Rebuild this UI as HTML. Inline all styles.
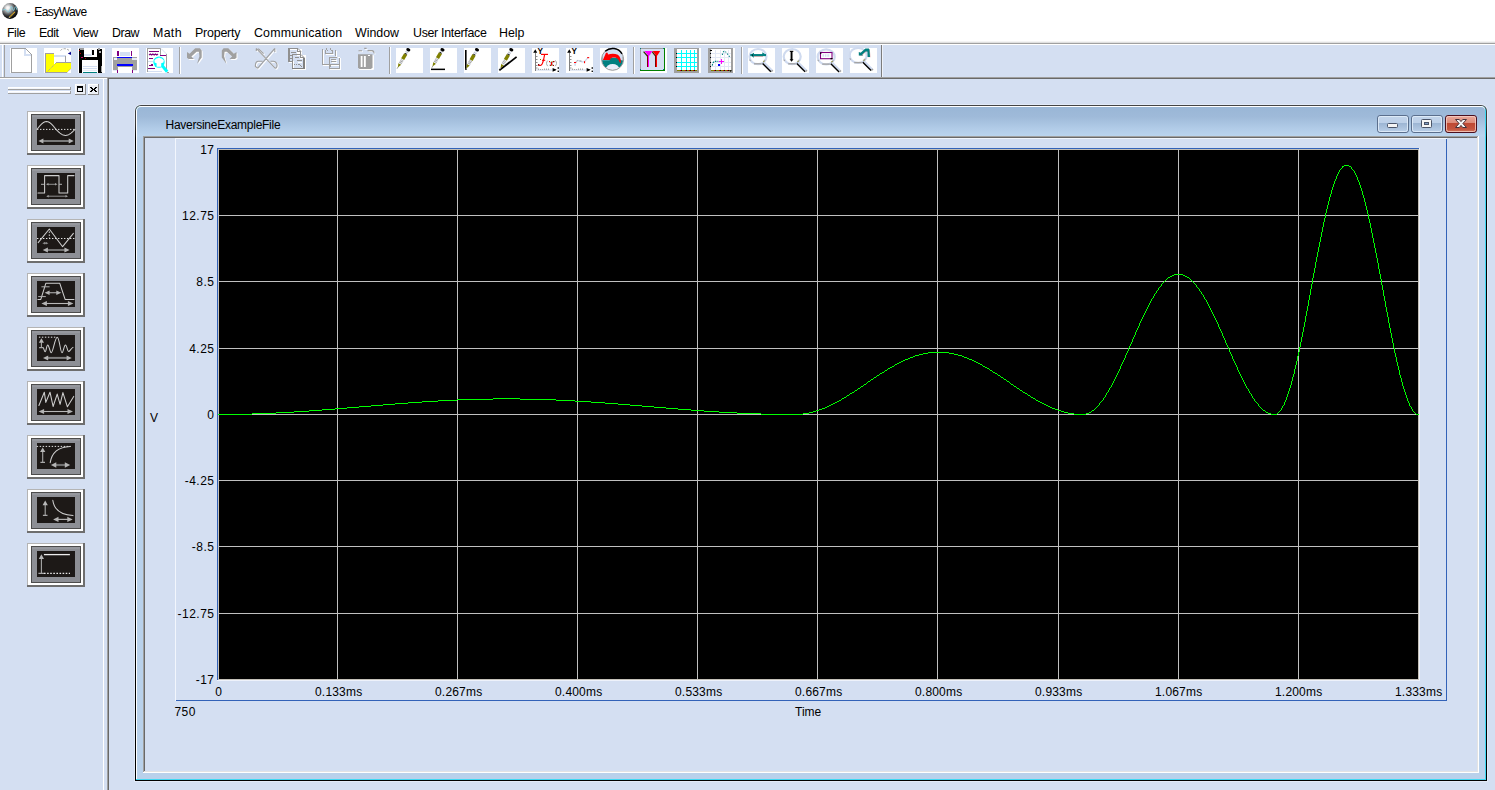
<!DOCTYPE html>
<html><head><meta charset="utf-8"><title>- EasyWave</title>
<style>
*{box-sizing:border-box;margin:0;padding:0}
html,body{width:1495px;height:790px;overflow:hidden}
body{background:#d4dff2;font-family:"Liberation Sans",sans-serif;font-size:12px;color:#000;position:relative}
.abs{position:absolute}
.t{position:absolute;white-space:nowrap;line-height:14px;height:14px}
#titlebar{left:0;top:0;width:1495px;height:22px;background:#fff}
#menubar{left:0;top:22px;width:1495px;height:19px;background:#fff}
.mi{position:absolute;top:26px;line-height:14px;white-space:nowrap;font-size:12.4px}
.btn9{position:absolute;left:27px;width:58px;height:43px}
.yl{position:absolute;right:1280.5px;letter-spacing:0.5px;text-align:right;line-height:14px;white-space:nowrap;font-size:12px}
.xl{position:absolute;top:685px;width:80px;letter-spacing:0.2px;padding-left:1.4px;text-align:center;line-height:14px;white-space:nowrap;font-size:12px}
</style></head><body>
<!-- title bar -->
<div id="titlebar" class="abs"></div>
<svg class="abs" style="left:0;top:0" width="22" height="22" viewBox="0 0 22 22">
<defs><radialGradient id="sph" cx="0.38" cy="0.32" r="0.75" fx="0.36" fy="0.3"><stop offset="0" stop-color="#ffffff"/><stop offset="0.14" stop-color="#ececec"/><stop offset="0.36" stop-color="#9a9c9e"/><stop offset="0.62" stop-color="#3a3c3e"/><stop offset="0.88" stop-color="#080808"/></radialGradient></defs>
<circle cx="10" cy="11" r="7.9" fill="url(#sph)"/>
<path d="M2.4 10.3C3.6 9.6 4.8 9.2 5.8 9.6C6.8 10.2 7.2 12.2 8.4 12.2C9.6 12.2 10.6 6.4 11.6 6.4C12.4 6.4 12.6 10.6 13.4 10.6C14.2 10.6 14.8 6.7 15.6 6.7C16.2 6.7 16.6 9 17 10.2" stroke="#7fd2e2" stroke-width="0.9" fill="none" stroke-opacity="0.9"/>
<path d="M9.6 17.2L15 11.8" stroke="#f0b822" stroke-width="1.3" stroke-dasharray="0.9 0.35" fill="none"/>
<path d="M9 17.8L9.8 17" stroke="#e8e8e8" stroke-width="1" fill="none"/>
</svg>
<div class="t" id="apptitle" style="left:26.5px;top:5px;font-size:12px;letter-spacing:-0.58px;word-spacing:1.6px">- EasyWave</div>
<!-- menu bar -->
<div id="menubar" class="abs"></div>
<div class="mi" style="left:7px;letter-spacing:-0.45px">File</div>
<div class="mi" style="left:39px;letter-spacing:-0.45px">Edit</div>
<div class="mi" style="left:73px;letter-spacing:-0.5px">View</div>
<div class="mi" style="left:112px;letter-spacing:-0.45px">Draw</div>
<div class="mi" style="left:153px;letter-spacing:0.33px">Math</div>
<div class="mi" style="left:195px;letter-spacing:-0.19px">Property</div>
<div class="mi" style="left:254px;letter-spacing:0.17px">Communication</div>
<div class="mi" style="left:355px">Window</div>
<div class="mi" style="left:413px;letter-spacing:-0.31px">User Interface</div>
<div class="mi" style="left:499px">Help</div>
<div class="abs" style="left:0;top:41px;width:1495px;height:1px;background:#f4f4f4"></div>
<div class="abs" style="left:0;top:42px;width:1495px;height:1px;background:#e0e0e0"></div>
<div class="abs" style="left:0;top:43px;width:1495px;height:1px;background:#a0a0a0"></div>
<div class="abs" style="left:0;top:44px;width:1495px;height:1px;background:#fff"></div>
<!-- toolbar -->
<svg class="abs" style="left:0;top:45px" width="900" height="33" viewBox="0 45 900 33">
<rect x="2" y="45" width="1" height="32" fill="#fff"/><rect x="4" y="45" width="1" height="32" fill="#a0a0a0"/>
<rect x="881" y="45" width="1" height="32" fill="#7c7c7c"/><rect x="882" y="45" width="1" height="32" fill="#eef2fa"/>
<rect x="10" y="48" width="27" height="25" fill="#fff"/>
<rect x="44" y="48" width="27" height="25" fill="#fff"/>
<rect x="78" y="48" width="27" height="25" fill="#fff"/>
<rect x="112" y="48" width="27" height="25" fill="#fff"/>
<rect x="146" y="48" width="27" height="25" fill="#fff"/>
<rect x="396" y="48" width="27" height="25" fill="#fff"/>
<rect x="430" y="48" width="27" height="25" fill="#fff"/>
<rect x="464" y="48" width="27" height="25" fill="#fff"/>
<rect x="498" y="48" width="27" height="25" fill="#fff"/>
<rect x="532" y="48" width="27" height="25" fill="#fff"/>
<rect x="566" y="48" width="27" height="25" fill="#fff"/>
<rect x="600" y="48" width="27" height="25" fill="#fff"/>
<rect x="748" y="48" width="27" height="25" fill="#fff"/>
<rect x="782" y="48" width="27" height="25" fill="#fff"/>
<rect x="816" y="48" width="27" height="25" fill="#fff"/>
<rect x="850" y="48" width="27" height="25" fill="#fff"/>
<g transform="translate(10,48)" shape-rendering="crispEdges"><path d="M1.5 0.5H15.5L21.5 6.5V24.5H1.5z" fill="#fff" stroke="#a0a0a0"/><path d="M14 1h1.5v5h5.5v1.5H14z" fill="#d4dff2"/></g>
<path d="M25.5 48.5L31.5 54.5" stroke="#a0a0a0" stroke-width="1" fill="none"/>
<g transform="translate(44,48)" shape-rendering="crispEdges"><rect x="1" y="5" width="9" height="20" fill="#a0a0a0"/><rect x="2" y="6" width="8" height="18" fill="#ffff00"/><rect x="10" y="7" width="12" height="2" fill="#d4dff2"/><rect x="21" y="8" width="1" height="7" fill="#a0a0a0"/><path d="M12.2 14.5H27V20.3L23 24.5H2z" fill="#ffff00"/><rect x="12" y="14" width="15" height="1" fill="#a0a0a0"/><rect x="1" y="24" width="22" height="1" fill="#a0a0a0"/></g>
<g transform="translate(44,48)" ><path d="M2.5 24.5L12.5 14.5" stroke="#a0a0a0" stroke-width="1" stroke-dasharray="1 1" fill="none"/><path d="M23 24.5L27 20.5" stroke="#a0a0a0" stroke-width="1" stroke-dasharray="1 1" fill="none"/><path d="M16.5 2.5C18.5 0 23.5 -0.2 26.3 3.8" stroke="#a0a0a0" stroke-width="1" stroke-dasharray="2.2 1.4" fill="none"/><path d="M23.8 5.4L27 3.8V7z" fill="#00008b"/></g>
<g transform="translate(78,48)" shape-rendering="crispEdges"><rect x="1" y="1" width="23" height="24" fill="#000"/><rect x="6" y="0" width="13" height="9" fill="#fff"/><rect x="6" y="6" width="8" height="2" fill="#d4dff2"/><rect x="14" y="2" width="2" height="5" fill="#000"/><rect x="13" y="1" width="1" height="7" fill="#eaeff9"/><rect x="1" y="0" width="1" height="1" fill="#a0a0a0"/><rect x="2" y="0" width="4" height="2" fill="#a0a0a0"/><rect x="20" y="0" width="2" height="2" fill="#a0a0a0"/><rect x="21" y="3" width="2" height="2" fill="#b0b0b0"/><rect x="4" y="12" width="16" height="13" fill="#fff"/><rect x="5" y="18" width="14" height="1" fill="#d4dff2"/><rect x="5" y="20" width="14" height="1" fill="#d4dff2"/><rect x="5" y="22" width="14" height="1" fill="#e6ebf7"/><rect x="5" y="24" width="14" height="1" fill="#008080"/><rect x="1" y="2" width="1" height="1" fill="#c00000"/><rect x="2" y="5" width="1" height="1" fill="#c00000"/><rect x="3" y="9" width="2" height="1" fill="#c00060"/><rect x="7" y="10" width="1" height="1" fill="#a00000"/><rect x="23" y="18" width="1" height="6" fill="#a0a0a0"/></g>
<g transform="translate(112,48)" shape-rendering="crispEdges"><rect x="5" y="3" width="2" height="5" fill="#800080"/><rect x="19" y="3" width="1" height="5" fill="#800080"/><rect x="8" y="4" width="10" height="4" fill="#d4dff2"/><rect x="1" y="9" width="24" height="13" fill="#a0a0a0"/><rect x="2" y="10" width="3" height="2" fill="#eef2fa"/><rect x="20" y="10" width="5" height="2" fill="#e6ebf7"/><rect x="5" y="9" width="15" height="1" fill="#0000ff"/><rect x="5" y="16" width="16" height="2" fill="#0000ff"/><rect x="6" y="19" width="14" height="6" fill="#fff"/><rect x="5" y="22" width="1" height="3" fill="#800080"/><rect x="20" y="22" width="1" height="3" fill="#800080"/><rect x="1" y="22" width="4" height="1" fill="#e6ebf7"/><rect x="21" y="22" width="4" height="1" fill="#e6ebf7"/></g>
<g transform="translate(146,48)" shape-rendering="crispEdges"><rect x="1" y="0" width="14" height="1" fill="#a0a0a0"/><rect x="1" y="0" width="1" height="24" fill="#a0a0a0"/><rect x="20" y="6" width="1" height="18" fill="#a0a0a0"/><rect x="14" y="0" width="1" height="7" fill="#a0a0a0"/><rect x="14" y="7" width="6" height="1" fill="#800080"/><rect x="3" y="3" width="10" height="1" fill="#800080"/><rect x="3" y="10" width="4" height="1" fill="#800080"/><rect x="3" y="17" width="4" height="1" fill="#800080"/><rect x="5" y="16" width="2" height="1" fill="#800080"/><rect x="2" y="20" width="7" height="1" fill="#800080"/><rect x="2" y="13" width="5" height="1" fill="#d4dff2"/><rect x="2" y="23" width="14" height="1" fill="#d4dff2"/></g>
<g transform="translate(146,48)" ><path d="M15 0.5L20.5 6" stroke="#d4dff2" stroke-width="1" fill="none"/><path d="M3 7l1.3-1 1.3 1 1.3-1 1.3 1 1.3-1 1.3 1 1.2-1" stroke="#800080" stroke-width="1.1" fill="none"/><path d="M16.2 17.6L21.2 23.8" stroke="#00ffff" stroke-width="3" fill="none"/><circle cx="13" cy="14.1" r="5.7" fill="#00ffff"/><path d="M8.4 12.2L10.4 10.4L12.4 10L13 9.2L13.8 10L15.8 10.4L17.8 12.2L17.4 14.6L15.2 15.2V18.8H10.6V15.2L8.6 14.6z" fill="#fff"/><rect x="21" y="24" width="2" height="1" fill="#a0a0a0"/></g>
<rect x="179" y="47" width="1" height="27" fill="#a0a0a0"/><rect x="180" y="47" width="1" height="27" fill="#fff"/>
<path d="M187 52V57.8L188.6 59H194L191.4 56.6L196.6 51.7H198.9L199.4 56.2L197.1 63.7L201.7 57.6V50.5L199.9 48.2H195.2L189.6 53.8z" fill="#fff" transform="translate(1,1)"/><path d="M187 52V57.8L188.6 59H194L191.4 56.6L196.6 51.7H198.9L199.4 56.2L197.1 63.7L201.7 57.6V50.5L199.9 48.2H195.2L189.6 53.8z" fill="#a0a0a0"/>
<g transform="translate(423.5,0) scale(-1,1)"><path d="M187 52V57.8L188.6 59H194L191.4 56.6L196.6 51.7H198.9L199.4 56.2L197.1 63.7L201.7 57.6V50.5L199.9 48.2H195.2L189.6 53.8z" fill="#fff" transform="translate(-1,1)"/><path d="M187 52V57.8L188.6 59H194L191.4 56.6L196.6 51.7H198.9L199.4 56.2L197.1 63.7L201.7 57.6V50.5L199.9 48.2H195.2L189.6 53.8z" fill="#a0a0a0"/></g>
<path d="M256.3 48.4L274.6 67.6M258.3 48.6L263.6 53.6M256.3 48.4V51M274.8 48.4L257.8 68.2M274.8 48.4V52M270.5 61.3H273.5C276 61.6 277.3 63.6 277 66C276.6 68 275.3 68.7 274.6 67.6M262.5 61.3H258C255.6 61.6 255.2 63.4 255.4 66.5L257.8 68.2" stroke="#fff" stroke-width="1.1" fill="none" transform="translate(1,1)"/><path d="M256.3 48.4L274.6 67.6M258.3 48.6L263.6 53.6M256.3 48.4V51M274.8 48.4L257.8 68.2M274.8 48.4V52M270.5 61.3H273.5C276 61.6 277.3 63.6 277 66C276.6 68 275.3 68.7 274.6 67.6M262.5 61.3H258C255.6 61.6 255.2 63.4 255.4 66.5L257.8 68.2" stroke="#a0a0a0" stroke-width="1.1" fill="none"/>
<g shape-rendering="crispEdges"><rect x="289" y="49" width="13" height="14" fill="#fff"/><rect x="293" y="55" width="13" height="15" fill="#fff"/><rect x="288" y="48" width="2" height="14" fill="#909090"/><rect x="288" y="48" width="10" height="1" fill="#909090"/><rect x="288" y="61" width="5" height="1" fill="#909090"/><rect x="300" y="52" width="1" height="3" fill="#909090"/><rect x="297" y="48" width="1" height="4" fill="#909090"/><rect x="297" y="51" width="4" height="1" fill="#909090"/><rect x="290" y="50" width="7" height="11" fill="#d4dff2"/><rect x="291" y="52" width="5" height="1" fill="#909090"/><rect x="290" y="55" width="2" height="1" fill="#909090"/><rect x="290" y="58" width="2" height="1" fill="#909090"/><rect x="292" y="54" width="1" height="15" fill="#909090"/><rect x="292" y="54" width="9" height="1" fill="#909090"/><rect x="303" y="58" width="2" height="11" fill="#808080"/><rect x="292" y="68" width="13" height="1" fill="#808080"/><rect x="300" y="54" width="1" height="4" fill="#909090"/><rect x="300" y="57" width="4" height="1" fill="#909090"/><rect x="294" y="56" width="6" height="12" fill="#d4dff2"/><rect x="300" y="59" width="3" height="9" fill="#d4dff2"/><rect x="295" y="57" width="4" height="1" fill="#909090"/><rect x="297" y="60" width="5" height="1" fill="#909090"/><rect x="298" y="62" width="4" height="1" fill="#fff"/><rect x="294" y="64" width="1" height="1" fill="#909090"/><rect x="296" y="64" width="1" height="1" fill="#909090"/><rect x="298" y="64" width="1" height="1" fill="#909090"/></g><path d="M298 48.5L301 51.5M301 54.5L304.5 58M299 64L302 67" stroke="#909090" stroke-width="1" fill="none"/>
<g shape-rendering="crispEdges"><rect x="323" y="50" width="1" height="16" fill="#fff"/><rect x="323" y="65" width="7" height="1" fill="#fff"/><rect x="336" y="51" width="1" height="6" fill="#fff"/><rect x="322" y="49" width="1" height="16" fill="#a0a0a0"/><rect x="322" y="64" width="7" height="1" fill="#a0a0a0"/><rect x="335" y="50" width="1" height="6" fill="#a0a0a0"/><rect x="326" y="54" width="8" height="1" fill="#fff"/><rect x="325" y="53" width="8" height="1" fill="#a0a0a0"/><rect x="325" y="50" width="1" height="3" fill="#a0a0a0"/><rect x="332" y="50" width="1" height="3" fill="#a0a0a0"/><rect x="326" y="48" width="1" height="2" fill="#a0a0a0"/><rect x="330" y="48" width="1" height="2" fill="#a0a0a0"/><rect x="327" y="50" width="1" height="1" fill="#a0a0a0"/><rect x="331" y="50" width="1" height="1" fill="#a0a0a0"/><rect x="330" y="58" width="11" height="12" fill="#fff"/><rect x="329" y="57" width="11" height="12" fill="#a0a0a0"/><rect x="330" y="58" width="9" height="10" fill="#d4dff2"/><rect x="337" y="56" width="2" height="2" fill="#d4dff2"/><rect x="338" y="57" width="2" height="1" fill="#fff"/><rect x="331" y="59" width="5" height="1" fill="#a0a0a0"/><rect x="332" y="60" width="5" height="1" fill="#fff"/><rect x="331" y="61" width="5" height="1" fill="#a0a0a0"/><rect x="332" y="62" width="5" height="1" fill="#fff"/><rect x="330" y="64" width="9" height="1" fill="#a0a0a0"/><rect x="330" y="65" width="9" height="1" fill="#fff"/><rect x="330" y="65" width="1" height="2" fill="#a0a0a0"/></g>
<rect x="359" y="55" width="15" height="15" fill="#fff" rx="1"/><path d="M358 54.2H372.5V67.5L371 69H359.5L358 67.5z" fill="#a0a0a0"/><rect x="360.7" y="56" width="1.8" height="11" fill="#fff"/><rect x="363.9" y="56" width="1.9" height="11" fill="#fff"/><rect x="368" y="55" width="2" height="1" fill="#fff"/><path d="M358.5 50.8H362M364.2 48.4H366.6M367.5 50.6H372C373.4 50.8 374 52 374 53.6" stroke="#fff" stroke-width="1" fill="none" transform="translate(1,1)"/><path d="M358.5 50.8H362M364.2 48.4H366.6M367.5 50.6H372C373.4 50.8 374 52 374 53.6" stroke="#a0a0a0" stroke-width="1.1" fill="none"/><path d="M358 53.2H373.5" stroke="#d4dff2" stroke-width="1" fill="none"/>
<rect x="389" y="47" width="1" height="27" fill="#a0a0a0"/><rect x="390" y="47" width="1" height="27" fill="#fff"/>
<g transform="translate(396,48)" ><path d="M1.10 20.60L1.92 19.22" stroke="#909090" stroke-width="1" fill="none" /><path d="M1.71 19.57L5.28 16.68L2.53 15.05z" fill="#808000"/><path d="M3.90 15.87L4.31 15.18" stroke="#e8eefa" stroke-width="3.6" fill="none" /><path d="M4.31 15.18L6.35 11.74" stroke="#a4a4a4" stroke-width="3.0" fill="none" /><path d="M4.82 14.32L5.13 13.80" stroke="#f4f6fb" stroke-width="3.6" fill="none" /><path d="M5.64 12.94L5.94 12.43" stroke="#f4f6fb" stroke-width="3.6" fill="none" /><path d="M6.35 11.74L6.66 11.22" stroke="#e8eefa" stroke-width="3.8" fill="none" /><path d="M6.66 11.22L9.66 6.15" stroke="#808000" stroke-width="3.5" fill="none" /><path d="M9.66 6.15L10.17 5.29" stroke="#202020" stroke-width="2.6" fill="none" /><path d="M10.28 5.11L11.60 2.88" stroke="#e4ebf8" stroke-width="3.0" fill="none" /><path d="M10.68 4.43L10.99 3.91" stroke="#b0b0b0" stroke-width="3.0" fill="none" /><ellipse cx="12.30" cy="1.70" rx="2.1" ry="1.6" fill="#000" transform="rotate(20 12.30 1.70)"/></g>
<g transform="translate(430,48)" ><path d="M1.90 19.60L2.72 18.22" stroke="#909090" stroke-width="1" fill="none" /><path d="M2.51 18.57L6.08 15.68L3.33 14.05z" fill="#808000"/><path d="M4.70 14.87L5.11 14.18" stroke="#e8eefa" stroke-width="3.6" fill="none" /><path d="M5.11 14.18L7.15 10.74" stroke="#a4a4a4" stroke-width="3.0" fill="none" /><path d="M5.62 13.32L5.93 12.80" stroke="#f4f6fb" stroke-width="3.6" fill="none" /><path d="M6.43 11.94L6.74 11.43" stroke="#f4f6fb" stroke-width="3.6" fill="none" /><path d="M7.15 10.74L7.45 10.22" stroke="#e8eefa" stroke-width="3.8" fill="none" /><path d="M7.45 10.22L10.46 5.14" stroke="#808000" stroke-width="3.5" fill="none" /><path d="M10.46 5.14L10.97 4.28" stroke="#202020" stroke-width="2.6" fill="none" /><path d="M11.07 4.11L12.40 1.87" stroke="#e4ebf8" stroke-width="3.0" fill="none" /><path d="M11.48 3.42L11.79 2.91" stroke="#b0b0b0" stroke-width="3.0" fill="none" /><ellipse cx="12.50" cy="1.70" rx="2.1" ry="1.6" fill="#000" transform="rotate(20 12.50 1.70)"/><rect x="1" y="20.6" width="14" height="1.5" fill="#000"/></g>
<g transform="translate(464,48)" ><rect x="1" y="2" width="1.6" height="20" fill="#000"/><path d="M1.70 21.50L2.49 20.11" stroke="#909090" stroke-width="1" fill="none" /><path d="M2.29 20.46L5.82 17.52L3.04 15.93z" fill="#808000"/><path d="M4.43 16.72L4.82 16.03" stroke="#e8eefa" stroke-width="3.6" fill="none" /><path d="M4.82 16.03L6.81 12.55" stroke="#a4a4a4" stroke-width="3.0" fill="none" /><path d="M5.32 15.16L5.62 14.64" stroke="#f4f6fb" stroke-width="3.6" fill="none" /><path d="M6.11 13.77L6.41 13.25" stroke="#f4f6fb" stroke-width="3.6" fill="none" /><path d="M6.81 12.55L7.10 12.03" stroke="#e8eefa" stroke-width="3.8" fill="none" /><path d="M7.10 12.03L10.03 6.91" stroke="#808000" stroke-width="3.5" fill="none" /><path d="M10.03 6.91L10.52 6.04" stroke="#202020" stroke-width="2.6" fill="none" /><path d="M10.62 5.87L11.91 3.61" stroke="#e4ebf8" stroke-width="3.0" fill="none" /><path d="M11.02 5.17L11.32 4.65" stroke="#b0b0b0" stroke-width="3.0" fill="none" /><ellipse cx="13.00" cy="1.70" rx="2.1" ry="1.6" fill="#000" transform="rotate(20 13.00 1.70)"/></g>
<g transform="translate(498,48)" ><path d="M1.3 22.3L18.6 8.9" stroke="#000" stroke-width="1.8" fill="none"/><path d="M1.90 21.30L2.70 19.92" stroke="#909090" stroke-width="1" fill="none" /><path d="M2.50 20.26L6.05 17.35L3.28 15.74z" fill="#808000"/><path d="M4.67 16.55L5.07 15.85" stroke="#e8eefa" stroke-width="3.6" fill="none" /><path d="M5.07 15.85L7.08 12.40" stroke="#a4a4a4" stroke-width="3.0" fill="none" /><path d="M5.57 14.99L5.87 14.47" stroke="#f4f6fb" stroke-width="3.6" fill="none" /><path d="M6.37 13.61L6.68 13.09" stroke="#f4f6fb" stroke-width="3.6" fill="none" /><path d="M7.08 12.40L7.38 11.88" stroke="#e8eefa" stroke-width="3.8" fill="none" /><path d="M7.38 11.88L10.35 6.78" stroke="#808000" stroke-width="3.5" fill="none" /><path d="M10.35 6.78L10.85 5.91" stroke="#202020" stroke-width="2.6" fill="none" /><path d="M10.95 5.74L12.26 3.49" stroke="#e4ebf8" stroke-width="3.0" fill="none" /><path d="M11.35 5.05L11.65 4.53" stroke="#b0b0b0" stroke-width="3.0" fill="none" /><ellipse cx="13.30" cy="1.70" rx="2.1" ry="1.6" fill="#000" transform="rotate(20 13.30 1.70)"/></g>
<g transform="translate(532,48)" ><rect x="3" y="4.5" width="1" height="18.5" fill="#808080"/><path d="M1.2 4.8L3.3 1.3L5.2 4.8z" fill="#000"/><path d="M4 8.5h1.5M4 11.5h1.5M4 14.5h1.5M4 17.5h1.5M4 20h1.5" stroke="#909090" stroke-width="1" fill="none"/><rect x="4" y="21.5" width="17" height="1" fill="#ccd6ea"/><path d="M6.5 20.5v1.5M8.5 21v1M10.5 21v1M12.5 20.5v1.5M14.5 20.5v1.5M16.5 20.5v1.5" stroke="#a8a8a8" stroke-width="1" fill="none"/><path d="M20.6 20L24.6 21.8L20.6 23.8z" fill="#000"/><rect x="21" y="21.2" width="2.4" height="1.3" fill="#000"/><rect x="25.6" y="19.2" width="1.3" height="1.6" fill="#000"/><rect x="25.6" y="22.6" width="1.3" height="1.4" fill="#000"/><text x="5.4" y="5.9" font-family="Liberation Sans,sans-serif" font-weight="bold" font-size="8.2px" fill="#000">Y</text><path d="M9 6.4H16" stroke="#ff0000" stroke-width="1.2" fill="none"/><path d="M12.6 6.6C12 10 11.6 13 10.4 15.6C9.4 17.6 7.6 18.2 6.2 16.6" stroke="#ff0000" stroke-width="1.15" fill="none"/><path d="M10 12.3H13.2" stroke="#ff0000" stroke-width="1.1" fill="none"/><rect x="6" y="16" width="1.3" height="1.6" fill="#800000"/><rect x="8" y="11" width="1" height="1" fill="#808000"/><path d="M15.6 12.6C14 14.5 14.2 16.5 15.8 18.2M23.4 12.4C25 14.4 24.8 16.6 23.2 18.2" stroke="#a8a8a8" stroke-width="1" fill="none"/><path d="M17.3 13.5L21.6 17.6M21.8 13.4C20.5 14.5 18.8 16.5 17.5 17.6" stroke="#b0b0b0" stroke-width="1.1" fill="none"/><rect x="19" y="14" width="1.2" height="3" fill="#ff0000"/><rect x="17" y="13" width="1" height="1" fill="#ff0000"/><rect x="21" y="13" width="1.5" height="1.2" fill="#a00000"/><rect x="18" y="17" width="1.2" height="1" fill="#c00000"/><rect x="21" y="17" width="1" height="1" fill="#a00000"/><rect x="19.5" y="13" width="1" height="1" fill="#808000"/><rect x="19.4" y="17" width="1" height="1" fill="#808000"/></g>
<g transform="translate(566,48)" ><rect x="3" y="4.5" width="1" height="18.5" fill="#808080"/><path d="M1.2 4.8L3.3 1.3L5.2 4.8z" fill="#000"/><path d="M4 8.5h1.5M4 11.5h1.5M4 14.5h1.5M4 17.5h1.5M4 20h1.5" stroke="#909090" stroke-width="1" fill="none"/><rect x="4" y="21.5" width="17" height="1" fill="#ccd6ea"/><path d="M6.5 20.5v1.5M8.5 21v1M10.5 21v1M12.5 20.5v1.5M14.5 20.5v1.5M16.5 20.5v1.5" stroke="#a8a8a8" stroke-width="1" fill="none"/><path d="M20.6 20L24.6 21.8L20.6 23.8z" fill="#000"/><rect x="21" y="21.2" width="2.4" height="1.3" fill="#000"/><rect x="25.6" y="19.2" width="1.3" height="1.6" fill="#000"/><rect x="25.6" y="22.6" width="1.3" height="1.4" fill="#000"/><text x="5.4" y="5.9" font-family="Liberation Sans,sans-serif" font-weight="bold" font-size="8.2px" fill="#000">Y</text><path d="M9.5 14.3L12 12.4L16 13.9H18.3L22.4 9.2" stroke="#cdd7eb" stroke-width="1.2" fill="none"/><path d="M10.6 13.2l1-0.8M13.5 13h2" stroke="#a0a0a0" stroke-width="1" fill="none"/><rect x="8.2" y="15" width="1.8" height="2.8" fill="#d4dff2"/><rect x="8" y="14" width="2.2" height="1" fill="#ff0000"/><rect x="18" y="13.2" width="1.1" height="2" fill="#ff0000"/><rect x="21.2" y="9.1" width="2" height="1.1" fill="#ff0000"/></g>
<g transform="translate(600,48)" ><clipPath id="gc"><circle cx="12.6" cy="11.3" r="10.8"/></clipPath><circle cx="12.6" cy="11.3" r="11" fill="#d4dff2"/><g clip-path="url(#gc)"><path d="M0 12.2H9.6L10.4 9.8H19L21 12.2H26V19.4H0z" fill="#008080"/><ellipse cx="12.6" cy="21" rx="6.6" ry="5" fill="#e9eef9"/><path d="M0 19.2H6L12.6 22.4L19.4 19.2H26V24H0z" fill="#e9eef9"/><path d="M1.4 7v6M23.8 7v6" stroke="#008080" stroke-width="1" stroke-dasharray="1 1" fill="none"/></g><path d="M2.9 11.9L6 4.8H7.6L8 6.6C11 5.6 15 5.6 17.8 6.8C20.2 8.4 21 11.2 20.8 15L19.6 14.6C19 12 17.6 10.4 15.4 9.6C13.6 9.2 11.2 9.6 10.6 10.6L10 11.9z" fill="#ff0000"/><circle cx="12.6" cy="11.3" r="11" fill="none" stroke="#989898" stroke-width="1"/><path d="M5.2 3.2A11 11 0 0 1 22 5.8" fill="none" stroke="#000" stroke-width="1.5"/><path d="M2.4 12V8.5M22.9 12.5V9" stroke="#a8a8a8" stroke-width="1" fill="none"/></g>
<rect x="633" y="47" width="1" height="27" fill="#a0a0a0"/><rect x="634" y="47" width="1" height="27" fill="#fff"/>
<g shape-rendering="crispEdges"><rect x="640" y="48" width="27" height="25" fill="#fff"/><rect x="640" y="48" width="25" height="23" fill="#008000"/><rect x="640" y="48" width="24" height="22" fill="#a0a0a0"/><rect x="641" y="49" width="23" height="21" fill="#d4dff2"/><rect x="640" y="48" width="1" height="1" fill="#008080"/><rect x="663" y="48" width="1" height="1" fill="#008080"/><rect x="640" y="69" width="1" height="1" fill="#008080"/><rect x="663" y="69" width="1" height="1" fill="#008080"/><rect x="647" y="55" width="1" height="12" fill="#800000"/><rect x="648" y="55" width="1" height="12" fill="#ff00ff"/><rect x="655" y="55" width="1" height="12" fill="#800000"/><rect x="656" y="55" width="1" height="12" fill="#ff0000"/></g><path d="M643.6 51.6L647.4 56" stroke="#303000" stroke-width="1.2" fill="none"/><path d="M652.2 51.6L655.4 56" stroke="#303000" stroke-width="1.2" fill="none"/><path d="M644.4 51H652.4L649.6 55.6H648z" fill="#ff00ff"/><path d="M652.6 51H660.2L657.4 55.6H655.8z" fill="#ff0000"/>
<g shape-rendering="crispEdges"><rect x="674" y="48" width="27" height="25" fill="#fff"/><rect x="674" y="48" width="25" height="25" fill="#a0a0a0"/><rect x="677" y="49" width="20" height="22" fill="#fff"/><rect x="677" y="70" width="20" height="1" fill="#808000"/><rect x="681" y="50" width="1" height="20" fill="#00ffff"/><rect x="681" y="70" width="1" height="1" fill="#200000"/><rect x="680" y="70" width="1" height="1" fill="#c00000"/><rect x="686" y="50" width="1" height="20" fill="#00ffff"/><rect x="686" y="70" width="1" height="1" fill="#200000"/><rect x="685" y="70" width="1" height="1" fill="#c00000"/><rect x="690" y="50" width="1" height="20" fill="#00ffff"/><rect x="690" y="70" width="1" height="1" fill="#200000"/><rect x="689" y="70" width="1" height="1" fill="#c00000"/><rect x="694" y="50" width="1" height="20" fill="#00ffff"/><rect x="694" y="70" width="1" height="1" fill="#200000"/><rect x="693" y="70" width="1" height="1" fill="#c00000"/><rect x="677" y="53" width="20" height="1" fill="#00ffff"/><rect x="676" y="53" width="1" height="1" fill="#000"/><rect x="677" y="57" width="20" height="1" fill="#00ffff"/><rect x="676" y="57" width="1" height="1" fill="#000"/><rect x="677" y="62" width="20" height="1" fill="#00ffff"/><rect x="676" y="62" width="1" height="1" fill="#000"/><rect x="677" y="66" width="20" height="1" fill="#00ffff"/><rect x="676" y="66" width="1" height="1" fill="#000"/></g>
<g shape-rendering="crispEdges"><rect x="708" y="48" width="27" height="25" fill="#fff"/><rect x="708" y="48" width="25" height="25" fill="#a0a0a0"/><rect x="711" y="49" width="20" height="22" fill="#fff"/><rect x="711" y="70" width="20" height="1" fill="#808000"/><rect x="715" y="50" width="1" height="20" fill="#e2e8f5"/><rect x="715" y="70" width="1" height="1" fill="#200000"/><rect x="714" y="70" width="1" height="1" fill="#c00000"/><rect x="720" y="50" width="1" height="20" fill="#e2e8f5"/><rect x="720" y="70" width="1" height="1" fill="#200000"/><rect x="719" y="70" width="1" height="1" fill="#c00000"/><rect x="724" y="50" width="1" height="20" fill="#e2e8f5"/><rect x="724" y="70" width="1" height="1" fill="#200000"/><rect x="723" y="70" width="1" height="1" fill="#c00000"/><rect x="728" y="50" width="1" height="20" fill="#e2e8f5"/><rect x="728" y="70" width="1" height="1" fill="#200000"/><rect x="727" y="70" width="1" height="1" fill="#c00000"/><rect x="711" y="53" width="20" height="1" fill="#e2e8f5"/><rect x="710" y="53" width="1" height="1" fill="#000"/><rect x="711" y="57" width="20" height="1" fill="#e2e8f5"/><rect x="710" y="57" width="1" height="1" fill="#000"/><rect x="711" y="62" width="20" height="1" fill="#e2e8f5"/><rect x="710" y="62" width="1" height="1" fill="#000"/><rect x="711" y="66" width="20" height="1" fill="#e2e8f5"/><rect x="710" y="66" width="1" height="1" fill="#000"/><rect x="710" y="50" width="2" height="1" fill="#000"/><rect x="718" y="64" width="2" height="2" fill="#0000ff"/><rect x="719" y="61" width="5" height="1.4" fill="#ff00ff"/><rect x="721" y="59" width="1.4" height="5" fill="#ff00ff"/></g><path d="M712.2 65.6C712.8 63 713.6 61.6 714.6 61.4H718.4" stroke="#008080" stroke-width="1.1" stroke-dasharray="1.6 1" fill="none"/><path d="M722.4 55C722.6 52 724 51 724.8 51.2C726 51.6 727.6 54.6 730.4 57.4" stroke="#008080" stroke-width="1.1" stroke-dasharray="1.2 1.6" fill="none"/><path d="M729.4 70.2H732L730.7 72z" fill="#000"/>
<rect x="741" y="47" width="1" height="27" fill="#a0a0a0"/><rect x="742" y="47" width="1" height="27" fill="#fff"/>
<g transform="translate(748,48)" ><ellipse cx="10" cy="8.6" rx="8.5" ry="7.6" fill="none" stroke="#cfdaef" stroke-width="2.2"/><path d="M6 15.8H13.6" stroke="#a4a4a4" stroke-width="1.4" fill="none"/><path d="M1.5999999999999996 11.6l1 1.4M17.2 11.8l-2 3" stroke="#a8a8a8" stroke-width="1.1" fill="none"/><rect x="15.3" y="12.8" width="1" height="1" fill="#808000"/><path d="M15.9 14.399999999999999L24 22.6" stroke="#cfdaef" stroke-width="2.2" fill="none"/><path d="M14.6 15.5L22.9 23.799999999999997" stroke="#000" stroke-width="1.4" fill="none"/><path d="M23.2 23.799999999999997l1.6 -1.6" stroke="#a0a0a0" stroke-width="1.4" fill="none"/><path d="M2.4 7.1H18" stroke="#008080" stroke-width="2.1" fill="none"/><path d="M2.2 7.1L6 4.8V9.8z" fill="#008080"/><path d="M14.3 4.2L18 6.8H14.3z" fill="#008080"/><rect x="4" y="6.6" width="1" height="1" fill="#000"/><path d="M5.5 8.5H15" stroke="#c0a0a0" stroke-width="0.8" fill="none"/></g>
<g transform="translate(782,48)" ><ellipse cx="10.2" cy="8.6" rx="8.5" ry="7.6" fill="none" stroke="#cfdaef" stroke-width="2.2"/><path d="M6.199999999999999 15.8H13.799999999999999" stroke="#a4a4a4" stroke-width="1.4" fill="none"/><path d="M1.799999999999999 11.6l1 1.4M17.4 11.8l-2 3" stroke="#a8a8a8" stroke-width="1.1" fill="none"/><rect x="15.5" y="12.8" width="1" height="1" fill="#808000"/><path d="M16.1 14.399999999999999L24.2 22.6" stroke="#cfdaef" stroke-width="2.2" fill="none"/><path d="M14.799999999999999 15.5L23.1 23.799999999999997" stroke="#000" stroke-width="1.4" fill="none"/><path d="M23.4 23.799999999999997l1.6 -1.6" stroke="#a0a0a0" stroke-width="1.4" fill="none"/><rect x="8.6" y="3" width="1.9" height="9" fill="#000"/><rect x="7.8" y="2.8" width="3.5" height="1.1" fill="#000"/><path d="M7.6 11.2H11.5L9.55 13.7z" fill="#000"/></g>
<g transform="translate(816,48)" ><ellipse cx="10.2" cy="8.9" rx="8.5" ry="7.6" fill="none" stroke="#cfdaef" stroke-width="2.2"/><path d="M6.199999999999999 16.1H13.799999999999999" stroke="#a4a4a4" stroke-width="1.4" fill="none"/><path d="M1.799999999999999 11.9l1 1.4M17.4 12.100000000000001l-2 3" stroke="#a8a8a8" stroke-width="1.1" fill="none"/><rect x="15.5" y="13.100000000000001" width="1" height="1" fill="#808000"/><path d="M16.1 14.7L24.2 22.9" stroke="#cfdaef" stroke-width="2.2" fill="none"/><path d="M14.799999999999999 15.8L23.1 24.1" stroke="#000" stroke-width="1.4" fill="none"/><path d="M23.4 24.1l1.6 -1.6" stroke="#a0a0a0" stroke-width="1.4" fill="none"/><rect x="4.5" y="4.5" width="11.5" height="6.2" fill="none" stroke="#800080" stroke-width="1.1"/><rect x="4" y="4.6" width="1.4" height="1.2" fill="#000"/><rect x="14.5" y="10" width="2" height="1.3" fill="#000"/><path d="M6.5 7.5h7.5" stroke="#d4dff2" stroke-width="2.4" stroke-dasharray="1.6 0.8" fill="none"/></g>
<g transform="translate(850,48)" ><ellipse cx="8.2" cy="7.4" rx="8.5" ry="7.6" fill="none" stroke="#cfdaef" stroke-width="2.2"/><path d="M4.199999999999999 14.600000000000001H11.799999999999999" stroke="#a4a4a4" stroke-width="1.4" fill="none"/><path d="M-0.20000000000000107 10.4l1 1.4M15.399999999999999 10.600000000000001l-2 3" stroke="#a8a8a8" stroke-width="1.1" fill="none"/><rect x="13.5" y="11.600000000000001" width="1" height="1" fill="#808000"/><path d="M14.1 13.2L22.2 21.4" stroke="#cfdaef" stroke-width="2.2" fill="none"/><path d="M12.799999999999999 14.3L21.1 22.6" stroke="#000" stroke-width="1.4" fill="none"/><path d="M21.4 22.6l1.6 -1.6" stroke="#a0a0a0" stroke-width="1.4" fill="none"/><path d="M8.8 4V7.5H12.8L12.2 6.6L15.6 3.4H17.4L17.6 8.9H20L19.4 1.6L18.8 0.6H15.4L10.6 4.8z" fill="#e0b0b0" transform="translate(0.5,0.3)"/><path d="M8.8 4V7.5H12.8L12.2 6.6L15.6 3.4H17.4L17.6 8.9H20L19.4 1.6L18.8 0.6H15.4L10.6 4.8z" fill="#008080"/></g>
</svg>
<div class="abs" style="left:0;top:77px;width:1495px;height:1px;background:#a0a0a0"></div>
<div class="abs" style="left:0;top:78px;width:107px;height:1px;background:#fff"></div>
<!-- left panel -->
<div class="abs" style="left:103px;top:79px;width:1px;height:711px;background:#fff"></div>
<div class="abs" style="left:107px;top:78px;width:1px;height:712px;background:#a0a0a0"></div>
<div class="abs" style="left:108px;top:78px;width:1px;height:712px;background:#696969"></div>
<div class="abs" style="left:108px;top:78px;width:1387px;height:1px;background:#696969"></div>
<svg class="abs" style="left:0;top:79px" width="103" height="24" viewBox="0 79 103 24" shape-rendering="crispEdges"><rect x="8" y="87" width="63" height="3" fill="#a0a0a0"/><rect x="8" y="87" width="62" height="2" fill="#fff"/><rect x="9" y="88" width="61" height="1" fill="#f2f5fb"/><rect x="8" y="91" width="63" height="3" fill="#a0a0a0"/><rect x="8" y="91" width="62" height="2" fill="#fff"/><rect x="9" y="92" width="61" height="1" fill="#f2f5fb"/><rect x="75" y="84" width="11" height="11" fill="#8a8a8a"/><rect x="75" y="84" width="10" height="10" fill="#fff"/><rect x="76" y="85" width="9" height="9" fill="#eceff5"/><rect x="77" y="86" width="6" height="6" fill="#000"/><rect x="78" y="88" width="4" height="3" fill="#eceff5"/><rect x="88" y="84" width="11" height="11" fill="#8a8a8a"/><rect x="88" y="84" width="10" height="10" fill="#fff"/><rect x="89" y="85" width="9" height="9" fill="#eceff5"/><path d="M90 87h2v1h1v1h1v-1h1v-1h2v1h-1v1h-1v1h1v1h1v1h-2v-1h-1v-1h-1v1h-1v1h-2v-1h1v-1h1v-1h-1v-1h-1z" fill="#000"/></svg>
<svg class="abs" style="left:27px;top:111px" width="58" height="44" viewBox="0 0 58 44"><rect x="0" y="0" width="58" height="44" fill="#6e6e6e"/><rect x="0" y="0" width="56" height="42" fill="#fff"/><rect x="0" y="0" width="56" height="1" fill="#b4b4b4"/><rect x="0" y="0" width="1" height="42" fill="#b4b4b4"/><rect x="4" y="3" width="50" height="37" fill="#4c4c4c"/><rect x="5" y="4" width="48" height="35" fill="#8d8f95"/><rect x="5" y="4" width="48" height="2" fill="#96989e"/><rect x="10" y="8" width="38" height="26" fill="#1d1917"/><g transform="translate(0,3)"><path d="M10 15.4H48" stroke="#e2e2e2" stroke-width="1" stroke-dasharray="1.4 1.6" fill="none"/><polyline points="10.0,15.40 10.5,14.76 11.0,14.12 11.5,13.49 12.0,12.87 12.5,12.27 13.0,11.69 13.5,11.13 14.0,10.61 14.5,10.12 15.0,9.66 15.5,9.24 16.0,8.87 16.5,8.54 17.0,8.26 17.5,8.02 18.0,7.84 18.5,7.71 19.0,7.63 19.5,7.60 20.0,7.63 20.5,7.71 21.0,7.84 21.5,8.02 22.0,8.26 22.5,8.54 23.0,8.87 23.5,9.24 24.0,9.66 24.5,10.12 25.0,10.61 25.5,11.13 26.0,11.69 26.5,12.27 27.0,12.87 27.5,13.49 28.0,14.12 28.5,14.76 29.0,15.40 29.5,15.90 30.0,16.39 30.5,16.87 31.0,17.35 31.5,17.81 32.0,18.26 32.5,18.68 33.0,19.09 33.5,19.46 34.0,19.81 34.5,20.13 35.0,20.42 35.5,20.68 36.0,20.89 36.5,21.07 37.0,21.22 37.5,21.32 38.0,21.38 38.5,21.40 39.0,21.38 39.5,21.32 40.0,21.22 40.5,21.07 41.0,20.89 41.5,20.68 42.0,20.42 42.5,20.13 43.0,19.81 43.5,19.46 44.0,19.09 44.5,18.68 45.0,18.26 45.5,17.81 46.0,17.35 46.5,16.87 47.0,16.39 47.5,15.90 48.0,15.40" stroke="#cecece" stroke-width="1.05" fill="none" stroke-linejoin="round" stroke-linecap="round"/><path d="M15.399999999999999 27H42.7" stroke="#7a7a7a" stroke-width="2" fill="none"/><path d="M11.4 27l5 -2.4v4.8zM46.7 27l-5 -2.4v4.8z" fill="#b4b4b4"/></g></svg>
<svg class="abs" style="left:27px;top:165px" width="58" height="44" viewBox="0 0 58 44"><rect x="0" y="0" width="58" height="44" fill="#6e6e6e"/><rect x="0" y="0" width="56" height="42" fill="#fff"/><rect x="0" y="0" width="56" height="1" fill="#b4b4b4"/><rect x="0" y="0" width="1" height="42" fill="#b4b4b4"/><rect x="4" y="3" width="50" height="37" fill="#4c4c4c"/><rect x="5" y="4" width="48" height="35" fill="#8d8f95"/><rect x="5" y="4" width="48" height="2" fill="#96989e"/><rect x="10" y="8" width="38" height="26" fill="#1d1917"/><g transform="translate(0,3)"><path d="M11 25H17.6V7.6H32V25H40.7V7.6H47" stroke="#cecece" stroke-width="1.05" fill="none" stroke-linejoin="round" stroke-linecap="round" stroke-linejoin="miter"/><path d="M14 16.3H17M32 16.3H35" stroke="#b0b0b0" stroke-width="1" fill="none"/><path d="M20.5 16.3H29.0" stroke="#909090" stroke-width="1" fill="none"/><path d="M19 16.3l2.5 -1.3v2.6zM30.5 16.3l-2.5 -1.3v2.6z" fill="#a0a0a0"/><path d="M20.7 28.2H39.5" stroke="#909090" stroke-width="1" fill="none"/><path d="M19.2 28.2l2.5 -1.3v2.6zM41 28.2l-2.5 -1.3v2.6z" fill="#a0a0a0"/></g></svg>
<svg class="abs" style="left:27px;top:219px" width="58" height="44" viewBox="0 0 58 44"><rect x="0" y="0" width="58" height="44" fill="#6e6e6e"/><rect x="0" y="0" width="56" height="42" fill="#fff"/><rect x="0" y="0" width="56" height="1" fill="#b4b4b4"/><rect x="0" y="0" width="1" height="42" fill="#b4b4b4"/><rect x="4" y="3" width="50" height="37" fill="#4c4c4c"/><rect x="5" y="4" width="48" height="35" fill="#8d8f95"/><rect x="5" y="4" width="48" height="2" fill="#96989e"/><rect x="10" y="8" width="38" height="26" fill="#1d1917"/><g transform="translate(0,3)"><path d="M10 16.5H48" stroke="#e2e2e2" stroke-width="1" stroke-dasharray="1.4 1.6" fill="none"/><path d="M22.3 9.5V16" stroke="#e2e2e2" stroke-width="1" stroke-dasharray="1.4 1.6" fill="none"/><path d="M11.2 20.6L22.3 7L35.6 24.7L46.4 11.4" stroke="#cecece" stroke-width="1.05" fill="none" stroke-linejoin="round" stroke-linecap="round"/><path d="M17.0 21.2H19.799999999999997" stroke="#8a8a8a" stroke-width="1.4" fill="none"/><path d="M15.4 21.2l2.6 -1.2v2.4zM21.4 21.2l-2.6 -1.2v2.4z" fill="#8a8a8a"/><path d="M19.9 28H38.4" stroke="#707070" stroke-width="2" fill="none"/><path d="M15.7 28l5.2 -2.6v5.2zM42.6 28l-5.2 -2.6v5.2z" fill="#b4b4b4"/></g></svg>
<svg class="abs" style="left:27px;top:273px" width="58" height="44" viewBox="0 0 58 44"><rect x="0" y="0" width="58" height="44" fill="#6e6e6e"/><rect x="0" y="0" width="56" height="42" fill="#fff"/><rect x="0" y="0" width="56" height="1" fill="#b4b4b4"/><rect x="0" y="0" width="1" height="42" fill="#b4b4b4"/><rect x="4" y="3" width="50" height="37" fill="#4c4c4c"/><rect x="5" y="4" width="48" height="35" fill="#8d8f95"/><rect x="5" y="4" width="48" height="2" fill="#96989e"/><rect x="10" y="8" width="38" height="26" fill="#1d1917"/><g transform="translate(0,3)"><path d="M10.9 23.4H13.8L18.8 7.3H32.8L38.1 23.4H47" stroke="#cecece" stroke-width="1.05" fill="none" stroke-linejoin="round" stroke-linecap="round"/><path d="M14.4 10.8H22.6M11.2 20.6H18.8" stroke="#b0b0b0" stroke-width="1" fill="none"/><path d="M21.6 16.7H30.299999999999997" stroke="#a0a0a0" stroke-width="1.2" fill="none"/><path d="M17.6 16.7l5 -2.3v4.6zM34.3 16.7l-5 -2.3v4.6z" fill="#b4b4b4"/><path d="M18.9 27.5H41.9" stroke="#b8b8b8" stroke-width="1.1" fill="none"/><path d="M14.4 27.5l5.5 -2.4v4.8zM46.4 27.5l-5.5 -2.4v4.8z" fill="#b4b4b4"/></g></svg>
<svg class="abs" style="left:27px;top:327px" width="58" height="44" viewBox="0 0 58 44"><rect x="0" y="0" width="58" height="44" fill="#6e6e6e"/><rect x="0" y="0" width="56" height="42" fill="#fff"/><rect x="0" y="0" width="56" height="1" fill="#b4b4b4"/><rect x="0" y="0" width="1" height="42" fill="#b4b4b4"/><rect x="4" y="3" width="50" height="37" fill="#4c4c4c"/><rect x="5" y="4" width="48" height="35" fill="#8d8f95"/><rect x="5" y="4" width="48" height="2" fill="#96989e"/><rect x="10" y="8" width="38" height="26" fill="#1d1917"/><g transform="translate(0,3)"><path d="M11.9 7.2H29" stroke="#e2e2e2" stroke-width="1" stroke-dasharray="1.4 1.6" fill="none"/><path d="M14.4 12.2V17.6M12.100000000000001 17.6H16.7" stroke="#a8a8a8" stroke-width="1.1" fill="none"/><path d="M14.4 8.2l2.6 4.5h-5.2z" fill="#b8b8b8"/><path d="M16.6 18.4C17.2 20 17.6 21.8 18.2 21.8C19.2 21.8 19.6 14.9 20.7 14.9C22 14.9 23 22.8 24.2 22.8C26 22.8 28 7.3 30.2 7.3C32.4 7.3 33.4 22.8 35 22.8C36.4 22.8 37 14.9 38.5 14.9C39.8 14.9 40.4 21.5 41.6 21.5C42.8 21.5 44 18.4 46 17.4" stroke="#cecece" stroke-width="1.05" fill="none" stroke-linejoin="round" stroke-linecap="round" stroke-width="1.4"/><path d="M20.2 27.9H40.599999999999994" stroke="#808080" stroke-width="2" fill="none"/><path d="M16 27.9l5.2 -2.5v5.0zM44.8 27.9l-5.2 -2.5v5.0z" fill="#b4b4b4"/></g></svg>
<svg class="abs" style="left:27px;top:381px" width="58" height="44" viewBox="0 0 58 44"><rect x="0" y="0" width="58" height="44" fill="#6e6e6e"/><rect x="0" y="0" width="56" height="42" fill="#fff"/><rect x="0" y="0" width="56" height="1" fill="#b4b4b4"/><rect x="0" y="0" width="1" height="42" fill="#b4b4b4"/><rect x="4" y="3" width="50" height="37" fill="#4c4c4c"/><rect x="5" y="4" width="48" height="35" fill="#8d8f95"/><rect x="5" y="4" width="48" height="2" fill="#96989e"/><rect x="10" y="8" width="38" height="26" fill="#1d1917"/><g transform="translate(0,3)"><path d="M11.9 21.5L17.3 8.2L18.8 18.4L23 8.2L26.1 22.5L30.2 10.1L33.1 20.3L35.9 8.6L40.4 22.8L46.7 12.4" stroke="#cecece" stroke-width="1.05" fill="none" stroke-linejoin="round" stroke-linecap="round" stroke-width="1.4"/><path d="M16.1 27.5H41.5" stroke="#b8b8b8" stroke-width="1.1" fill="none"/><path d="M11.6 27.5l5.5 -2.5v5.0zM46 27.5l-5.5 -2.5v5.0z" fill="#b4b4b4"/></g></svg>
<svg class="abs" style="left:27px;top:435px" width="58" height="44" viewBox="0 0 58 44"><rect x="0" y="0" width="58" height="44" fill="#6e6e6e"/><rect x="0" y="0" width="56" height="42" fill="#fff"/><rect x="0" y="0" width="56" height="1" fill="#b4b4b4"/><rect x="0" y="0" width="1" height="42" fill="#b4b4b4"/><rect x="4" y="3" width="50" height="37" fill="#4c4c4c"/><rect x="5" y="4" width="48" height="35" fill="#8d8f95"/><rect x="5" y="4" width="48" height="2" fill="#96989e"/><rect x="10" y="8" width="38" height="26" fill="#1d1917"/><g transform="translate(0,3)"><path d="M9.7 8.4H43.8" stroke="#e2e2e2" stroke-width="1" stroke-dasharray="1.4 1.6" fill="none"/><path d="M15.7 13.5V24.4M13.399999999999999 24.4H18.0" stroke="#a8a8a8" stroke-width="1.1" fill="none"/><path d="M15.7 9.5l2.6 4.5h-5.2z" fill="#b8b8b8"/><path d="M23.2 24.7C24.4 17 29.5 9.3 43 8.6" stroke="#cecece" stroke-width="1.05" fill="none" stroke-linejoin="round" stroke-linecap="round" stroke-width="1.3"/><path d="M28.299999999999997 27H38.800000000000004" stroke="#707070" stroke-width="2.2" fill="none"/><path d="M23.9 27l5.4 -2.7v5.4zM43.2 27l-5.4 -2.7v5.4z" fill="#b4b4b4"/></g></svg>
<svg class="abs" style="left:27px;top:489px" width="58" height="44" viewBox="0 0 58 44"><rect x="0" y="0" width="58" height="44" fill="#6e6e6e"/><rect x="0" y="0" width="56" height="42" fill="#fff"/><rect x="0" y="0" width="56" height="1" fill="#b4b4b4"/><rect x="0" y="0" width="1" height="42" fill="#b4b4b4"/><rect x="4" y="3" width="50" height="37" fill="#4c4c4c"/><rect x="5" y="4" width="48" height="35" fill="#8d8f95"/><rect x="5" y="4" width="48" height="2" fill="#96989e"/><rect x="10" y="8" width="38" height="26" fill="#1d1917"/><g transform="translate(0,3)"><path d="M18.2 12.8V23.4M15.899999999999999 23.4H20.5" stroke="#a8a8a8" stroke-width="1.1" fill="none"/><path d="M18.2 8.4l2.6 4.9h-5.2z" fill="#b8b8b8"/><path d="M25.8 8.2C27 17 33 22.8 46 23.6" stroke="#cecece" stroke-width="1.05" fill="none" stroke-linejoin="round" stroke-linecap="round" stroke-width="1.4"/><path d="M30.5 27.4H41.300000000000004" stroke="#b0b0b0" stroke-width="1.2" fill="none"/><path d="M26.1 27.4l5.4 -2.6v5.2zM45.7 27.4l-5.4 -2.6v5.2z" fill="#b4b4b4"/></g></svg>
<svg class="abs" style="left:27px;top:543px" width="58" height="44" viewBox="0 0 58 44"><rect x="0" y="0" width="58" height="44" fill="#6e6e6e"/><rect x="0" y="0" width="56" height="42" fill="#fff"/><rect x="0" y="0" width="56" height="1" fill="#b4b4b4"/><rect x="0" y="0" width="1" height="42" fill="#b4b4b4"/><rect x="4" y="3" width="50" height="37" fill="#4c4c4c"/><rect x="5" y="4" width="48" height="35" fill="#8d8f95"/><rect x="5" y="4" width="48" height="2" fill="#96989e"/><rect x="10" y="8" width="38" height="26" fill="#1d1917"/><g transform="translate(0,3)"><path d="M16.9 8.6H42.9" stroke="#ececec" stroke-width="1.3" fill="none"/><path d="M14.4 12.4V27.4M11.4 27.4H17.4" stroke="#a8a8a8" stroke-width="1.1" fill="none"/><path d="M14.4 8.2l2.6 4.700000000000001h-5.2z" fill="#b8b8b8"/><path d="M17 27.4H43" stroke="#e8e8e8" stroke-width="1.2" stroke-dasharray="1.6 1.5" fill="none"/></g></svg>
<!-- MDI child window -->
<div class="abs" style="left:134px;top:104px;width:1354px;height:678px;border-radius:7px 7px 0 0;background:#e2eaf8"></div>
<div id="win" class="abs" style="left:135px;top:105px;width:1352px;height:676px;border-radius:6px 6px 0 0;background:linear-gradient(#444 0px,#3a3a3a 18px,#000 34px)"></div>
<div class="abs" style="left:136px;top:106px;width:1350px;height:674px;border-radius:5px 5px 0 0;background:#3fd8f2"></div>
<div class="abs" style="left:136px;top:106px;width:1349px;height:673px;border-radius:5px 4px 0 0;background:#fff"></div>
<div id="frame" class="abs" style="left:137px;top:107px;width:1348px;height:672px;border-radius:4px 4px 0 0;background:linear-gradient(#99b6d6 0px,#9fbad9 10px,#b2cce8 22px,#bad4ee 29px,#b9d1eb 30px)"></div>
<div class="t" id="wintitle" style="left:165.5px;top:118px;font-size:12px;letter-spacing:-0.26px">HaversineExampleFile</div>
<!-- client edge -->
<div class="abs" style="left:143px;top:136px;width:1336px;height:637px;background:#fff"></div>
<div class="abs" style="left:143px;top:136px;width:1335px;height:636px;background:#a0a0a0"></div>
<div class="abs" style="left:144px;top:137px;width:1334px;height:635px;background:#e3e3e3"></div>
<div class="abs" style="left:144px;top:137px;width:1333px;height:634px;background:#696969"></div>
<div id="client" class="abs" style="left:145px;top:138px;width:1332px;height:633px;background:#d4dff2"></div>
<!-- caption buttons -->
<svg class="abs" style="left:1377px;top:115px" width="100" height="18" viewBox="0 0 100 18">
<defs>
<linearGradient id="gb" x1="0" y1="0" x2="0" y2="1"><stop offset="0" stop-color="#c3d5eb"/><stop offset="0.44" stop-color="#bdd0e8"/><stop offset="0.45" stop-color="#9cb5d3"/><stop offset="1" stop-color="#bbd0e9"/></linearGradient>
<linearGradient id="gr" x1="0" y1="0" x2="0" y2="1"><stop offset="0" stop-color="#eaa99b"/><stop offset="0.44" stop-color="#dc8b79"/><stop offset="0.45" stop-color="#be4832"/><stop offset="0.8" stop-color="#c4553f"/><stop offset="1" stop-color="#d48068"/></linearGradient>
</defs>
<rect x="0.5" y="0.5" width="31" height="17" rx="2.5" fill="url(#gb)" stroke="#5b6f8d"/>
<rect x="1.5" y="1.5" width="29" height="15" rx="2" fill="none" stroke="#e2edf9" stroke-opacity="0.85"/>
<rect x="34.5" y="0.5" width="31" height="17" rx="2.5" fill="url(#gb)" stroke="#5b6f8d"/>
<rect x="35.5" y="1.5" width="29" height="15" rx="2" fill="none" stroke="#e2edf9" stroke-opacity="0.85"/>
<rect x="68.5" y="0.5" width="31" height="17" rx="2.5" fill="url(#gr)" stroke="#4a101f"/>
<rect x="69.5" y="1.5" width="29" height="15" rx="2" fill="none" stroke="#f6cfc6" stroke-opacity="0.8"/>
<!-- minimize glyph -->
<rect x="10.5" y="8.5" width="10" height="4" rx="1" fill="#f4f4f4" stroke="#4a5468"/>
<!-- maximize glyph -->
<rect x="44.5" y="4.5" width="10" height="8" rx="1" fill="#f6f6f6" stroke="#4a5468"/>
<rect x="47.5" y="7.5" width="4" height="2" fill="#7f9cc4" stroke="#4a5468"/>
<!-- close glyph -->
<path d="M78.5 4.5h3.8l1.7 2.1 1.7-2.1h3.8l-3.6 4 3.6 4h-3.8l-1.7-2.1-1.7 2.1h-3.8l3.6-4z" fill="#f6f6f6" stroke="#46323a" stroke-width="1" stroke-linejoin="round"/>
</svg>
<svg class="abs" style="left:145px;top:138px" width="1332" height="633" viewBox="145 138 1332 633" shape-rendering="crispEdges">
<rect x="175" y="138" width="1272" height="1" fill="#f2f6fd"/>
<rect x="175" y="138" width="1" height="563" fill="#f2f6fd"/>
<rect x="1446" y="139" width="1" height="562" fill="#3262b8"/>
<rect x="176" y="700" width="1271" height="1" fill="#3262b8"/>
<rect x="217" y="148" width="1203" height="533" fill="#eef2fb"/>
<rect x="217" y="148" width="1202" height="532" fill="#3262b8"/>
<rect x="218" y="149" width="1201" height="531" fill="#c4c0b8"/>
<rect x="219" y="150" width="1199" height="529" fill="#000"/>
<rect x="337" y="150" width="1" height="529" fill="#c0c0c0"/>
<rect x="457" y="150" width="1" height="529" fill="#c0c0c0"/>
<rect x="577" y="150" width="1" height="529" fill="#c0c0c0"/>
<rect x="697" y="150" width="1" height="529" fill="#c0c0c0"/>
<rect x="817" y="150" width="1" height="529" fill="#c0c0c0"/>
<rect x="937" y="150" width="1" height="529" fill="#c0c0c0"/>
<rect x="1058" y="150" width="1" height="529" fill="#c0c0c0"/>
<rect x="1178" y="150" width="1" height="529" fill="#c0c0c0"/>
<rect x="1298" y="150" width="1" height="529" fill="#c0c0c0"/>
<rect x="219" y="215" width="1199" height="1" fill="#c0c0c0"/>
<rect x="219" y="281" width="1199" height="1" fill="#c0c0c0"/>
<rect x="219" y="348" width="1199" height="1" fill="#c0c0c0"/>
<rect x="219" y="414" width="1199" height="1" fill="#c0c0c0"/>
<rect x="219" y="480" width="1199" height="1" fill="#c0c0c0"/>
<rect x="219" y="546" width="1199" height="1" fill="#c0c0c0"/>
<rect x="219" y="613" width="1199" height="1" fill="#c0c0c0"/>
<path fill="#00ff00" d="M218 414h34v1h-34zM252 413h24v1h-24zM276 412h18v1h-18zM294 411h15v1h-15zM309 410h13v1h-13zM322 409h13v1h-13zM335 408h12v1h-12zM347 407h12v1h-12zM359 406h12v1h-12zM371 405h12v1h-12zM383 404h12v1h-12zM395 403h13v1h-13zM408 402h14v1h-14zM422 401h16v1h-16zM438 400h19v1h-19zM457 399h36v1h-36zM493 398h27v1h-27zM520 399h36v1h-36zM556 400h19v1h-19zM575 401h16v1h-16zM591 402h14v1h-14zM605 403h13v1h-13zM618 404h12v1h-12zM630 405h12v1h-12zM642 406h12v1h-12zM654 407h12v1h-12zM666 408h12v1h-12zM678 409h13v1h-13zM691 410h13v1h-13zM704 411h15v1h-15zM719 412h18v1h-18zM737 413h24v1h-24zM761 414h42v1h-42zM803 413h6v1h-6zM809 412h4v1h-4zM813 411h3v1h-3zM816 410h3v1h-3zM819 409h3v1h-3zM822 408h3v1h-3zM825 407h2v1h-2zM827 406h2v1h-2zM829 405h2v1h-2zM831 404h2v1h-2zM833 403h2v1h-2zM835 402h2v1h-2zM837 401h2v1h-2zM839 400h2v1h-2zM841 399h1v1h-1zM842 398h2v1h-2zM844 397h2v1h-2zM846 396h1v1h-1zM847 395h2v1h-2zM849 394h1v1h-1zM850 393h2v1h-2zM852 392h2v1h-2zM854 391h1v1h-1zM855 390h2v1h-2zM857 389h1v1h-1zM858 388h2v1h-2zM860 387h1v1h-1zM861 386h2v1h-2zM863 385h1v1h-1zM864 384h2v1h-2zM866 383h1v1h-1zM867 382h1v1h-1zM868 381h2v1h-2zM870 380h1v1h-1zM871 379h2v1h-2zM873 378h1v1h-1zM874 377h2v1h-2zM876 376h1v1h-1zM877 375h2v1h-2zM879 374h1v1h-1zM880 373h2v1h-2zM882 372h2v1h-2zM884 371h1v1h-1zM885 370h2v1h-2zM887 369h1v1h-1zM888 368h2v1h-2zM890 367h2v1h-2zM892 366h2v1h-2zM894 365h1v1h-1zM895 364h2v1h-2zM897 363h2v1h-2zM899 362h2v1h-2zM901 361h2v1h-2zM903 360h2v1h-2zM905 359h3v1h-3zM908 358h2v1h-2zM910 357h3v1h-3zM913 356h2v1h-2zM915 355h4v1h-4zM919 354h4v1h-4zM923 353h5v1h-5zM928 352h21v1h-21zM949 353h5v1h-5zM954 354h4v1h-4zM958 355h4v1h-4zM962 356h2v1h-2zM964 357h3v1h-3zM967 358h2v1h-2zM969 359h3v1h-3zM972 360h2v1h-2zM974 361h2v1h-2zM976 362h2v1h-2zM978 363h2v1h-2zM980 364h2v1h-2zM982 365h1v1h-1zM983 366h2v1h-2zM985 367h2v1h-2zM987 368h2v1h-2zM989 369h1v1h-1zM990 370h2v1h-2zM992 371h1v1h-1zM993 372h2v1h-2zM995 373h2v1h-2zM997 374h1v1h-1zM998 375h2v1h-2zM1000 376h1v1h-1zM1001 377h2v1h-2zM1003 378h1v1h-1zM1004 379h2v1h-2zM1006 380h1v1h-1zM1007 381h2v1h-2zM1009 382h1v1h-1zM1010 383h1v1h-1zM1011 384h2v1h-2zM1013 385h1v1h-1zM1014 386h2v1h-2zM1016 387h1v1h-1zM1017 388h2v1h-2zM1019 389h1v1h-1zM1020 390h2v1h-2zM1022 391h1v1h-1zM1023 392h2v1h-2zM1025 393h2v1h-2zM1027 394h1v1h-1zM1028 395h2v1h-2zM1030 396h1v1h-1zM1031 397h2v1h-2zM1033 398h2v1h-2zM1035 399h1v1h-1zM1036 400h2v1h-2zM1038 401h2v1h-2zM1040 402h2v1h-2zM1042 403h2v1h-2zM1044 404h2v1h-2zM1046 405h2v1h-2zM1048 406h2v1h-2zM1050 407h2v1h-2zM1052 408h3v1h-3zM1055 409h3v1h-3zM1058 410h3v1h-3zM1061 411h3v1h-3zM1064 412h4v1h-4zM1068 413h6v1h-6zM1074 414h12v1h-12zM1086 413h3v1h-3zM1089 412h2v1h-2zM1091 411h1v1h-1zM1092 410h2v1h-2zM1094 409h1v1h-1zM1095 408h1v1h-1zM1096 407h1v1h-1zM1097 406h1v1h-1zM1098 405h1v1h-1zM1099 403h1v2h-1zM1100 402h1v1h-1zM1101 401h1v1h-1zM1102 400h1v1h-1zM1103 398h1v2h-1zM1104 397h1v1h-1zM1105 395h1v2h-1zM1106 393h1v2h-1zM1107 392h1v1h-1zM1108 390h1v2h-1zM1109 388h1v2h-1zM1110 387h1v1h-1zM1111 385h1v2h-1zM1112 383h1v2h-1zM1113 381h1v2h-1zM1114 379h1v2h-1zM1115 377h1v2h-1zM1116 375h1v2h-1zM1117 373h1v2h-1zM1118 371h1v2h-1zM1119 369h1v2h-1zM1120 366h1v3h-1zM1121 364h1v2h-1zM1122 362h1v2h-1zM1123 360h1v2h-1zM1124 358h1v2h-1zM1125 355h1v3h-1zM1126 353h1v2h-1zM1127 351h1v2h-1zM1128 348h1v3h-1zM1129 346h1v2h-1zM1130 344h1v2h-1zM1131 342h1v2h-1zM1132 339h1v3h-1zM1133 337h1v2h-1zM1134 335h1v2h-1zM1135 332h1v3h-1zM1136 330h1v2h-1zM1137 328h1v2h-1zM1138 326h1v2h-1zM1139 323h1v3h-1zM1140 321h1v2h-1zM1141 319h1v2h-1zM1142 317h1v2h-1zM1143 315h1v2h-1zM1144 313h1v2h-1zM1145 311h1v2h-1zM1146 309h1v2h-1zM1147 307h1v2h-1zM1148 305h1v2h-1zM1149 303h1v2h-1zM1150 301h1v2h-1zM1151 299h1v2h-1zM1152 298h1v1h-1zM1153 296h1v2h-1zM1154 294h1v2h-1zM1155 293h1v1h-1zM1156 291h1v2h-1zM1157 290h1v1h-1zM1158 288h1v2h-1zM1159 287h1v1h-1zM1160 286h1v1h-1zM1161 284h1v2h-1zM1162 283h1v1h-1zM1163 282h1v1h-1zM1164 281h1v1h-1zM1165 280h1v1h-1zM1166 279h1v1h-1zM1167 278h1v1h-1zM1168 277h2v1h-2zM1170 276h2v1h-2zM1172 275h2v1h-2zM1174 274h9v1h-9zM1183 275h2v1h-2zM1185 276h2v1h-2zM1187 277h2v1h-2zM1189 278h1v1h-1zM1190 279h1v1h-1zM1191 280h1v1h-1zM1192 281h1v1h-1zM1193 282h1v1h-1zM1194 283h1v1h-1zM1195 284h1v1h-1zM1196 285h1v2h-1zM1197 287h1v1h-1zM1198 288h1v1h-1zM1199 289h1v2h-1zM1200 291h1v1h-1zM1201 292h1v2h-1zM1202 294h1v1h-1zM1203 295h1v2h-1zM1204 297h1v2h-1zM1205 299h1v1h-1zM1206 300h1v2h-1zM1207 302h1v2h-1zM1208 304h1v2h-1zM1209 306h1v2h-1zM1210 308h1v2h-1zM1211 310h1v2h-1zM1212 312h1v2h-1zM1213 314h1v2h-1zM1214 316h1v2h-1zM1215 318h1v2h-1zM1216 320h1v2h-1zM1217 322h1v2h-1zM1218 324h1v3h-1zM1219 327h1v2h-1zM1220 329h1v2h-1zM1221 331h1v2h-1zM1222 333h1v3h-1zM1223 336h1v2h-1zM1224 338h1v2h-1zM1225 340h1v3h-1zM1226 343h1v2h-1zM1227 345h1v2h-1zM1228 347h1v2h-1zM1229 349h1v3h-1zM1230 352h1v2h-1zM1231 354h1v2h-1zM1232 356h1v3h-1zM1233 359h1v2h-1zM1234 361h1v2h-1zM1235 363h1v2h-1zM1236 365h1v2h-1zM1237 367h1v3h-1zM1238 370h1v2h-1zM1239 372h1v2h-1zM1240 374h1v2h-1zM1241 376h1v2h-1zM1242 378h1v2h-1zM1243 380h1v2h-1zM1244 382h1v2h-1zM1245 384h1v2h-1zM1246 386h1v2h-1zM1247 388h1v1h-1zM1248 389h1v2h-1zM1249 391h1v2h-1zM1250 393h1v1h-1zM1251 394h1v2h-1zM1252 396h1v2h-1zM1253 398h1v1h-1zM1254 399h1v2h-1zM1255 401h1v1h-1zM1256 402h1v1h-1zM1257 403h1v1h-1zM1258 404h1v2h-1zM1259 406h1v1h-1zM1260 407h1v1h-1zM1261 408h1v1h-1zM1262 409h1v1h-1zM1263 410h2v1h-2zM1265 411h1v1h-1zM1266 412h2v1h-2zM1268 413h3v1h-3zM1271 414h6v1h-6zM1277 413h1v1h-1zM1278 412h1v1h-1zM1279 411h1v1h-1zM1280 410h1v1h-1zM1281 408h1v2h-1zM1282 406h1v2h-1zM1283 405h1v1h-1zM1284 402h1v3h-1zM1285 400h1v2h-1zM1286 397h1v3h-1zM1287 394h1v3h-1zM1288 391h1v3h-1zM1289 388h1v3h-1zM1290 385h1v3h-1zM1291 381h1v4h-1zM1292 377h1v4h-1zM1293 374h1v3h-1zM1294 369h1v5h-1zM1295 365h1v4h-1zM1296 361h1v4h-1zM1297 356h1v5h-1zM1298 352h1v4h-1zM1299 347h1v5h-1zM1300 342h1v5h-1zM1301 337h1v5h-1zM1302 332h1v5h-1zM1303 327h1v5h-1zM1304 322h1v5h-1zM1305 316h1v6h-1zM1306 311h1v5h-1zM1307 306h1v5h-1zM1308 300h1v6h-1zM1309 295h1v5h-1zM1310 289h1v6h-1zM1311 284h1v5h-1zM1312 278h1v6h-1zM1313 273h1v5h-1zM1314 268h1v5h-1zM1315 262h1v6h-1zM1316 257h1v5h-1zM1317 252h1v5h-1zM1318 247h1v5h-1zM1319 242h1v5h-1zM1320 237h1v5h-1zM1321 232h1v5h-1zM1322 227h1v5h-1zM1323 222h1v5h-1zM1324 218h1v4h-1zM1325 213h1v5h-1zM1326 209h1v4h-1zM1327 205h1v4h-1zM1328 201h1v4h-1zM1329 197h1v4h-1zM1330 194h1v3h-1zM1331 190h1v4h-1zM1332 187h1v3h-1zM1333 184h1v3h-1zM1334 181h1v3h-1zM1335 179h1v2h-1zM1336 176h1v3h-1zM1337 174h1v2h-1zM1338 172h1v2h-1zM1339 170h1v2h-1zM1340 169h1v1h-1zM1341 168h1v1h-1zM1342 166h1v2h-1zM1343 166h1v1h-1zM1344 165h5v1h-5zM1349 166h2v1h-2zM1351 167h1v2h-1zM1352 169h1v1h-1zM1353 170h1v1h-1zM1354 171h1v2h-1zM1355 173h1v2h-1zM1356 175h1v2h-1zM1357 177h1v3h-1zM1358 180h1v2h-1zM1359 182h1v3h-1zM1360 185h1v3h-1zM1361 188h1v3h-1zM1362 191h1v4h-1zM1363 195h1v3h-1zM1364 198h1v4h-1zM1365 202h1v4h-1zM1366 206h1v4h-1zM1367 210h1v4h-1zM1368 214h1v5h-1zM1369 219h1v4h-1zM1370 223h1v5h-1zM1371 228h1v5h-1zM1372 233h1v5h-1zM1373 238h1v5h-1zM1374 243h1v5h-1zM1375 248h1v5h-1zM1376 253h1v5h-1zM1377 258h1v5h-1zM1378 263h1v6h-1zM1379 269h1v5h-1zM1380 274h1v5h-1zM1381 279h1v6h-1zM1382 285h1v5h-1zM1383 290h1v6h-1zM1384 296h1v5h-1zM1385 301h1v6h-1zM1386 307h1v5h-1zM1387 312h1v5h-1zM1388 317h1v6h-1zM1389 323h1v5h-1zM1390 328h1v5h-1zM1391 333h1v5h-1zM1392 338h1v5h-1zM1393 343h1v5h-1zM1394 348h1v5h-1zM1395 353h1v4h-1zM1396 357h1v5h-1zM1397 362h1v4h-1zM1398 366h1v4h-1zM1399 370h1v5h-1zM1400 375h1v3h-1zM1401 378h1v4h-1zM1402 382h1v4h-1zM1403 386h1v3h-1zM1404 389h1v3h-1zM1405 392h1v3h-1zM1406 395h1v3h-1zM1407 398h1v3h-1zM1408 401h1v2h-1zM1409 403h1v3h-1zM1410 406h1v1h-1zM1411 407h1v2h-1zM1412 409h1v2h-1zM1413 411h1v1h-1zM1414 412h1v1h-1zM1415 413h1v1h-1zM1416 414h3v1h-3z"/>
</svg><!-- labels -->
<div class="yl" style="top:143px">17</div>
<div class="yl" style="top:209px">12.75</div>
<div class="yl" style="top:275px">8.5</div>
<div class="yl" style="top:342px">4.25</div>
<div class="yl" style="top:408px">0</div>
<div class="yl" style="top:474px">-4.25</div>
<div class="yl" style="top:540px">-8.5</div>
<div class="yl" style="top:607px">-12.75</div>
<div class="yl" style="top:673px">-17</div>
<div class="xl" style="left:178px">0</div>
<div class="xl" style="left:298px">0.133ms</div>
<div class="xl" style="left:418px">0.267ms</div>
<div class="xl" style="left:538px">0.400ms</div>
<div class="xl" style="left:658px">0.533ms</div>
<div class="xl" style="left:778px">0.667ms</div>
<div class="xl" style="left:898px">0.800ms</div>
<div class="xl" style="left:1018px">0.933ms</div>
<div class="xl" style="left:1138px">1.067ms</div>
<div class="xl" style="left:1258px">1.200ms</div>
<div class="xl" style="left:1378px">1.333ms</div>
<div class="t" id="lv" style="left:150px;top:411px">V</div>
<div class="t" id="l750" style="left:174.5px;top:705px;letter-spacing:0.4px">750</div>
<div class="t" id="ltime" style="left:795px;top:705px">Time</div>
</body></html>
